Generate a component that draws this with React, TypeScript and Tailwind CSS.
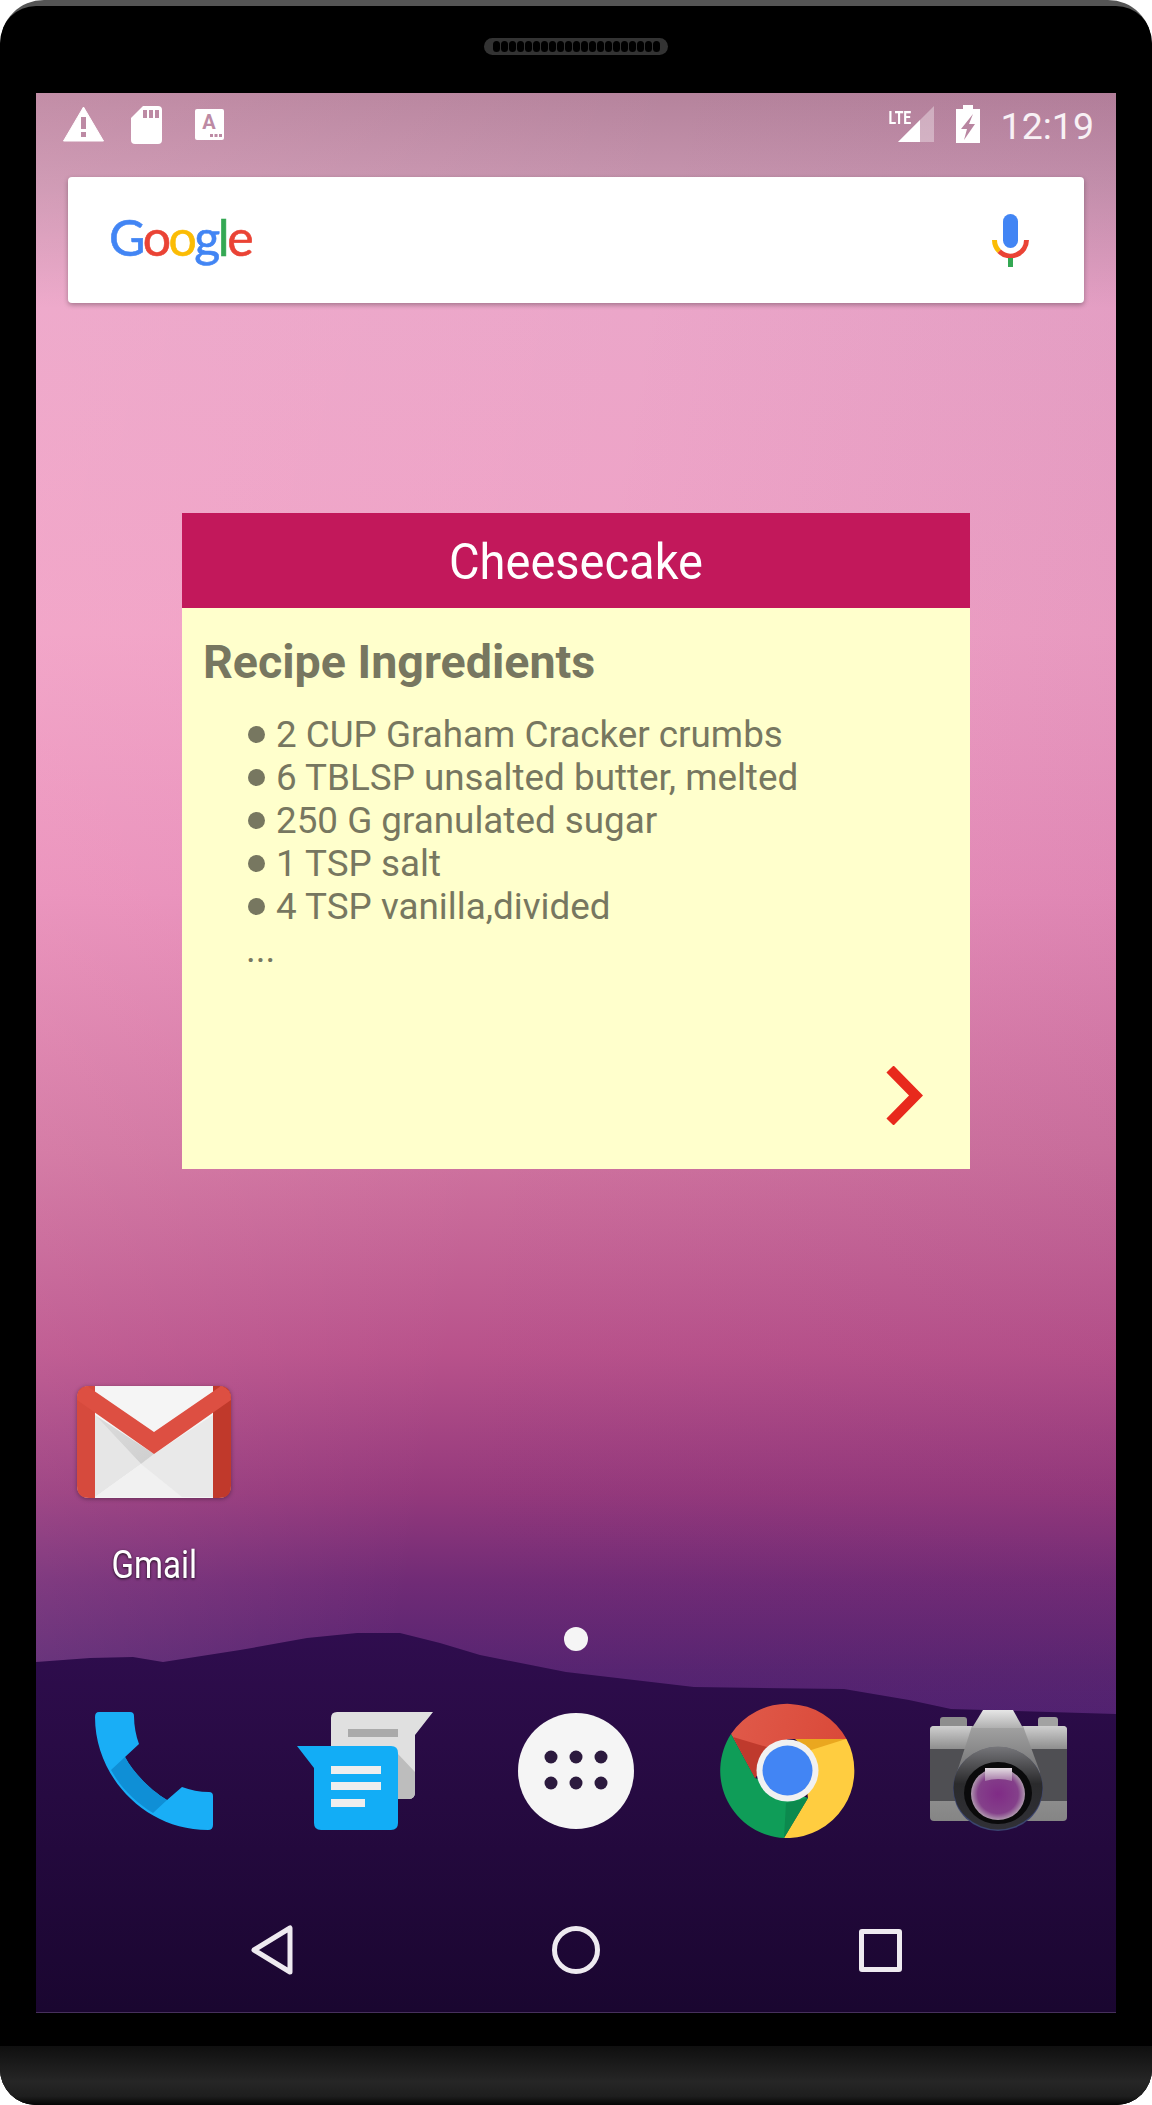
const ingredients = [
  "2 CUP Graham Cracker crumbs",
  "6 TBLSP unsalted butter, melted",
  "250 G granulated sugar",
  "1 TSP salt",
  "4 TSP vanilla,divided",
];

const speakerHoles = Array.from({ length: 21 }, (_, i) => i);

const StatusLeft = () => (
  <div className="flex items-start">
    <svg width="41" height="36" viewBox="0 0 41 36">
      <path d="M20.5 1 L40.5 35 H0.5Z" fill="#fff" stroke="#fff" strokeLinejoin="round" />
      <rect x="18" y="11" width="5" height="12" fill="#bd8aa4" />
      <rect x="18" y="26" width="5" height="5" fill="#bd8aa4" />
    </svg>
    <svg className="ml-[27px]" width="31" height="38" viewBox="0 0 31 38">
      <path d="M12 0 H27 Q31 0 31 4 V34 Q31 38 27 38 H4 Q0 38 0 34 V12Z" fill="#fff" />
      <path d="M12 4h4v8h-4z M18 4h4v8h-4z M24 4h4v8h-4z" fill="#bd8aa4" />
    </svg>
    <svg className="ml-[33px] mt-[3px]" width="29" height="31" viewBox="0 0 29 31">
      <rect width="29" height="31" rx="2" fill="#fff" />
      <text x="14" y="20" textAnchor="middle" fontFamily="Roboto, sans-serif" fontWeight="700" fontSize="20" fill="#bd8aa4">A</text>
      <path d="M15 25h3v3h-3z M19.5 25h3v3h-3z M24 25h3v3h-3z" fill="#bd8aa4" />
    </svg>
  </div>
);

const StatusRight = () => (
  <div className="flex items-start">
    <div className="relative w-[45px] h-[37px]">
      <svg width="45" height="37" viewBox="0 0 45 37">
        <path d="M9 36 L45 0 V36Z" fill="#fff" fillOpacity="0.35" />
        <path d="M9 36 L31 14 V36Z" fill="#fff" />
      </svg>
      <span className="absolute left-0 top-[2px] text-[14px] leading-[14px] font-bold text-white origin-top-left scale-y-[1.35] whitespace-nowrap">
        LTE
      </span>
    </div>
    <svg className="ml-[22px] -mt-px" width="24" height="38" viewBox="0 0 24 38">
      <path
        fillRule="evenodd"
        d="M7 0 H17 V4 H24 V38 H0 V4 H7Z M17 9 L5 24 H11 L8 35 L19 19 H13Z"
        fill="#fff"
      />
    </svg>
    <span className="ml-[21px] mt-[4px] text-[37.5px] leading-[32px] text-[#f8f1f5]">12:19</span>
  </div>
);

const GoogleLogo = () => (
  <span className="-ml-px -mt-[6px] text-[50px] leading-none tracking-[-2.5px] font-['Lato',sans-serif] [-webkit-text-stroke:0.6px]">
    <span className="text-[#4285f4]">G</span>
    <span className="text-[#ea4335]">o</span>
    <span className="text-[#fbbc05]">o</span>
    <span className="text-[#4285f4]">g</span>
    <span className="text-[#34a853]">l</span>
    <span className="text-[#ea4335]">e</span>
  </span>
);

const Mic = () => (
  <svg width="37" height="53" viewBox="0 0 37 53">
    <rect x="11" y="0" width="15" height="34" rx="7.5" fill="#4285f4" />
    <path d="M2.5 26 A16 16 0 0 0 7.2 37.3" fill="none" stroke="#fbbc05" strokeWidth="5" />
    <path d="M7.2 37.3 A16 16 0 0 0 34.5 26" fill="none" stroke="#ea4335" strokeWidth="5" />
    <rect x="16" y="44" width="5" height="9" fill="#34a853" />
  </svg>
);

const Gmail = () => (
  <svg width="154" height="113" viewBox="0 0 154 113" className="drop-shadow-[0_1px_2px_rgba(0,0,0,0.35)]">
    <defs>
      <linearGradient id="gmailShade" x1="0" y1="0" x2="1" y2="1">
        <stop offset="0" stopColor="#dcdcdc" />
        <stop offset="1" stopColor="#cfcfcf" />
      </linearGradient>
    </defs>
    <rect width="154" height="112" rx="12" fill="#f5f5f5" />
    <path d="M18 29 L64 78 L18 111Z" fill="#e6e6e6" />
    <path d="M18 111 L64 78 L105 111Z" fill="#f1f1f1" />
    <path d="M64 78 L77 68 L136 29 V111 H105Z" fill="#e9e9e9" />
    <path d="M18 29 L77 68 L64 78Z" fill="url(#gmailShade)" />
    <path d="M0 12 Q0 0 12 0 H18 V112 H12 Q0 112 0 100Z" fill="#d64a3d" />
    <path d="M136 0 H142 Q154 0 154 12 V100 Q154 112 142 112 H136Z" fill="#c0392b" />
    <path d="M10 0 L77 46 L144 0 Q154 2 154 14 L77 68 L0 14 Q0 2 10 0Z" fill="#dd4f42" />
  </svg>
);

const Phone = () => (
  <svg width="118" height="118" viewBox="0 0 118 118">
    <path
      d="M4 0 H35 Q39 0 39 4 C39 14 41 24 44 32 L30 45 C38 60 55 78 72 88 L87 75 C95 78 105 80 114 80 Q118 80 118 84 V113 Q118 118 113 118 C50 118 0 65 0 5 Q0 0 4 0Z"
      fill="#19aef6"
    />
    <path d="M16 58 L30 45 C38 60 55 78 72 88 L58 101 C40 90 26 76 16 58Z" fill="#0f8fd6" />
  </svg>
);

const Messages = () => (
  <svg width="136" height="118" viewBox="0 0 136 118">
    <path d="M40 0 H136 L118 23 V80 Q118 87 112 87 H34 V6 Q34 0 40 0Z" fill="#e0e0e0" />
    <path d="M101 42 L118 60 V80 Q118 87 112 87 H101Z" fill="#bdbdbd" />
    <rect x="51" y="17" width="50" height="8" fill="#aaaaaa" />
    <path d="M0 34 H94 Q101 34 101 41 V111 Q101 118 94 118 H24 Q17 118 17 111 V56Z" fill="#12adf6" />
    <rect x="34" y="54" width="50" height="8" fill="#eeeeee" />
    <rect x="34" y="70" width="50" height="8" fill="#eeeeee" />
    <rect x="34" y="87" width="34" height="8" fill="#eeeeee" />
  </svg>
);

const AppsButton = () => (
  <svg width="116" height="116" viewBox="0 0 116 116">
    <circle cx="58" cy="58" r="58" fill="#f5f5f5" />
    <g fill="#2c1a3e">
      <circle cx="33" cy="44" r="6.5" />
      <circle cx="58" cy="44" r="6.5" />
      <circle cx="83" cy="44" r="6.5" />
      <circle cx="33" cy="70" r="6.5" />
      <circle cx="58" cy="70" r="6.5" />
      <circle cx="83" cy="70" r="6.5" />
    </g>
  </svg>
);

const Chrome = () => (
  <svg width="135" height="135" viewBox="0 0 135 135">
    <defs>
      <linearGradient id="chromeRed" x1="0" y1="0" x2="1" y2="0.2">
        <stop offset="0" stopColor="#e05a4a" />
        <stop offset="1" stopColor="#da4a3a" />
      </linearGradient>
    </defs>
    <path d="M11 31 A67.5 67.5 0 0 1 126.5 36 H67.5 L35 75Z" fill="url(#chromeRed)" />
    <path d="M11 31 L35 75 L88 95 L64 135 A67.5 67.5 0 0 1 11 31Z" fill="#0f9d58" />
    <path d="M126.5 36 A67.5 67.5 0 0 1 64 135 L88 95 L80 36Z" fill="#ffcd40" />
    <path d="M13 34 L35 75 L50 45Z" fill="#bf3a2d" />
    <path d="M75 36 H126 L88 48Z" fill="#eaa71f" />
    <path d="M64 135 L88 95 L66 100Z" fill="#0c8a4e" />
    <circle cx="67.5" cy="67.5" r="31" fill="#f1f1f1" />
    <circle cx="67.5" cy="67.5" r="25" fill="#4285f4" />
  </svg>
);

const Camera = () => (
  <svg width="137" height="122" viewBox="0 0 137 122" className="blur-[0.6px]">
    <defs>
      <linearGradient id="camTop" x1="0" y1="0" x2="0" y2="1">
        <stop offset="0" stopColor="#cfcfcf" />
        <stop offset="1" stopColor="#8e8e8e" />
      </linearGradient>
      <linearGradient id="camBottom" x1="0" y1="0" x2="0" y2="1">
        <stop offset="0" stopColor="#a8a8a8" />
        <stop offset="1" stopColor="#858585" />
      </linearGradient>
      <linearGradient id="camHump" x1="0" y1="0" x2="0" y2="1">
        <stop offset="0" stopColor="#e6e6e6" />
        <stop offset="1" stopColor="#b0b0b0" />
      </linearGradient>
      <linearGradient id="camFace" x1="0" y1="0" x2="0" y2="1">
        <stop offset="0" stopColor="#a2a2a2" />
        <stop offset="1" stopColor="#58585a" />
      </linearGradient>
      <linearGradient id="camRing" x1="0" y1="0" x2="0" y2="1">
        <stop offset="0" stopColor="#76767a" />
        <stop offset="0.45" stopColor="#2a2a2c" />
        <stop offset="1" stopColor="#303036" />
      </linearGradient>
      <radialGradient id="camGlass" cx="0.5" cy="0.5" r="0.52">
        <stop offset="0" stopColor="#802b86" />
        <stop offset="0.72" stopColor="#84408a" />
        <stop offset="1" stopColor="#b6a6b4" />
      </radialGradient>
      <linearGradient id="camGlint" x1="0" y1="0" x2="0" y2="1">
        <stop offset="0" stopColor="#e4dde2" />
        <stop offset="1" stopColor="#a67aa8" />
      </linearGradient>
    </defs>
    <rect x="10" y="7" width="27" height="12" rx="3" fill="#8d8d8d" />
    <rect x="108" y="7" width="20" height="11" rx="3" fill="#a2a2a2" />
    <rect x="0" y="16" width="137" height="95" rx="4" fill="url(#camBottom)" />
    <path d="M0 20 Q0 16 4 16 H133 Q137 16 137 20 V39 H0Z" fill="url(#camTop)" />
    <rect x="0" y="39" width="137" height="52" fill="#4f4f53" />
    <path d="M42 16 H93 L110 62 V90 H27 V62Z" fill="url(#camFace)" />
    <path d="M53 0 H83 L93 18 H42Z" fill="url(#camHump)" />
    <ellipse cx="68" cy="79" rx="45" ry="42" fill="#3b4470" />
    <ellipse cx="68" cy="78" rx="44.5" ry="41.5" fill="url(#camRing)" />
    <ellipse cx="68" cy="83" rx="34" ry="31" fill="#0a0a0b" />
    <ellipse cx="68" cy="84" rx="27" ry="26" fill="url(#camGlass)" />
    <path d="M55 58 H82 V71 Q68 67 55 71Z" fill="url(#camGlint)" />
  </svg>
);

const Hill = () => (
  <svg className="absolute inset-0" width="1080" height="1919" viewBox="0 0 1080 1919">
    <defs>
      <linearGradient id="hillFill" x1="0" y1="0" x2="0" y2="1">
        <stop offset="0" stopColor="#2f0d4e" />
        <stop offset="1" stopColor="#1a0630" />
      </linearGradient>
    </defs>
    <path
      d="M0 1569 L54 1565 L97 1564 L127 1569 L204 1557 L271 1545 L321 1540 L364 1540 L404 1550 L444 1562 L530 1579 L658 1594 L808 1596 L873 1607 L915 1616 L1080 1621 V1919 H0Z"
      fill="url(#hillFill)"
    />
  </svg>
);

export default function App() {
  return (
    <div className="w-[1152px] h-[2105px] bg-white font-['Roboto',sans-serif]">
      <div className="h-full flex flex-col rounded-t-[44px] rounded-b-[36px] overflow-hidden bg-[#555555] pt-[6px]">
        <div className="flex-1 flex flex-col bg-black rounded-t-[36px]">
          {/* earpiece */}
          <div className="h-[87px] pt-[32px] flex justify-center">
            <div className="w-[184px] h-[17px] rounded-full bg-[#333333] flex items-center justify-center gap-[1px]">
              {speakerHoles.map((i) => (
                <span key={i} className="w-[7px] h-[11px] rounded-full bg-black" />
              ))}
            </div>
          </div>

          {/* screen */}
          <div className="relative mx-[36px] h-[1920px] border-b-2 border-[#46305c] bg-[linear-gradient(100deg,rgba(255,190,215,0.18)_0%,rgba(255,190,215,0)_45%,rgba(120,40,110,0.1)_100%),linear-gradient(180deg,#b5839c_0px,#c694ae_90px,#eba6c9_215px,#f0a2c6_540px,#e88fba_800px,#cf739f_1060px,#b8528b_1260px,#94397c_1400px,#702b76_1490px,#552471_1580px,#4a2070_1640px)]">
            <Hill />
            <div className="relative flex flex-col h-full">
              <div className="h-[84px] pt-[13px] pl-[27px] pr-[22px] flex justify-between items-start">
                <StatusLeft />
                <StatusRight />
              </div>

              <div className="mx-[32px] h-[126px] pl-[42px] pr-[55px] flex items-center justify-between bg-white rounded-[4px] shadow-[0_2px_5px_rgba(0,0,0,0.3)]">
                <GoogleLogo />
                <Mic />
              </div>

              {/* recipe widget */}
              <div className="mt-[210px] w-[788px] h-[656px] self-center flex flex-col bg-[#ffffcc]">
                <div className="h-[95px] flex items-center justify-center bg-[#c2185b] text-white text-[47px] leading-none">
                  <span className="mt-[2px] scale-y-[1.06]">Cheesecake</span>
                </div>
                <div className="flex-1 flex flex-col text-[#777760]">
                  <h2 className="pt-[27px] pl-[21px] text-[46.6px] leading-[54px] font-bold">Recipe Ingredients</h2>
                  <ul className="mt-[24px] pl-[66px]">
                    {ingredients.map((item) => (
                      <li key={item} className="flex items-center h-[43px] text-[36.8px] leading-[43px]">
                        <span className="w-[17px] h-[17px] rounded-full bg-[#777760] mr-[11px]" />
                        {item}
                      </li>
                    ))}
                  </ul>
                  <p className="pl-[64px] text-[37px] leading-[43px]">...</p>
                  <div className="mt-auto pr-[47px] pb-[44px] flex justify-end">
                    <svg width="37" height="59" viewBox="0 0 37 59">
                      <path d="M4 3 L30 29.5 L4 56" fill="none" stroke="#e8291c" strokeWidth="10" />
                    </svg>
                  </div>
                </div>
              </div>

              {/* home shortcut */}
              <div className="mt-[217px] px-[12.5px] grid grid-cols-5">
                <div className="flex flex-col items-center">
                  <Gmail />
                  <span className="mt-[48px] text-[38px] leading-[36px] text-white scale-x-[0.87] [text-shadow:0_1px_3px_rgba(0,0,0,0.8)]">
                    Gmail
                  </span>
                </div>
              </div>

              <div className="mt-[44px] w-[24px] h-[24px] self-center rounded-full bg-[#f5f5f5]" />

              {/* dock */}
              <div className="mt-[52px] h-[135px] px-[12.5px] grid grid-cols-5 items-center justify-items-center">
                <Phone />
                <Messages />
                <AppsButton />
                <Chrome />
                <Camera />
              </div>

              {/* navigation */}
              <div className="mt-[87px] h-[50px] px-[84px] grid grid-cols-3 items-center justify-items-center">
                <svg width="42" height="50" viewBox="0 0 42 50">
                  <path d="M39 3 V47 L3 25Z" fill="none" stroke="#eeeaf0" strokeWidth="5" strokeLinejoin="round" />
                </svg>
                <div className="w-[48px] h-[48px] rounded-full border-[5px] border-[#eeeaf0]" />
                <div className="w-[43px] h-[43px] rounded-[3px] border-[5px] border-[#eeeaf0]" />
              </div>
            </div>
          </div>

          <div className="h-[33px]" />
          {/* chin */}
          <div className="flex-1 bg-[linear-gradient(180deg,#0f0f0f_0%,#262626_60%,#1e1e1e_85%,#050505_100%)]" />
        </div>
      </div>
    </div>
  );
}
